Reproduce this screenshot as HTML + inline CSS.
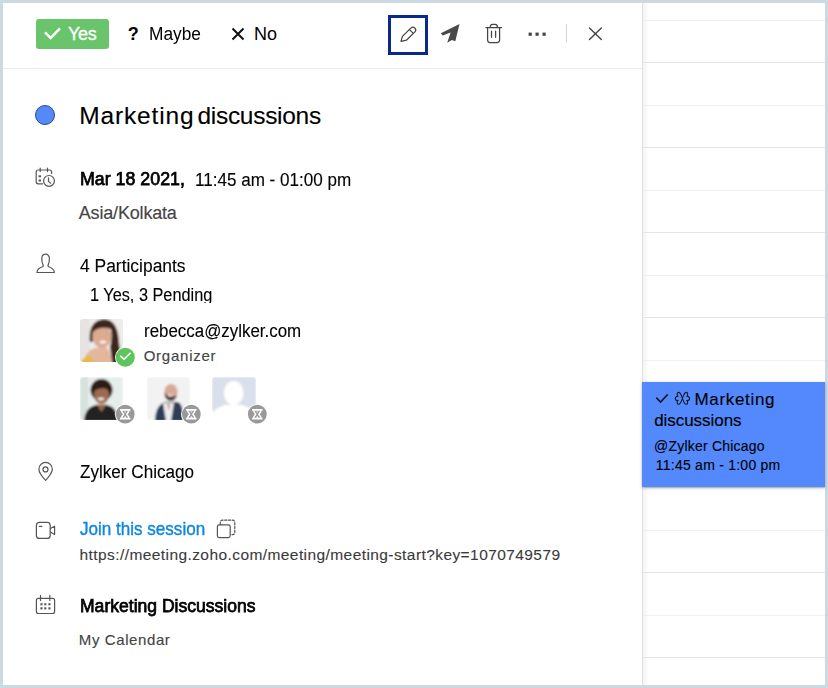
<!DOCTYPE html>
<html><head><meta charset="utf-8">
<style>
html,body{margin:0;padding:0;}
body{width:828px;height:688px;position:relative;overflow:hidden;background:#cbd9e0;font-family:"Liberation Sans",sans-serif;}
.a{position:absolute;}
.t{position:absolute;white-space:nowrap;line-height:1;}
#white{left:3px;top:3px;width:822px;height:682px;background:#fff;}
.hl{position:absolute;left:643px;width:182px;height:1px;background:#efefef;}
.hd{background:#e4e4e4;}
#vline{left:642px;top:3px;width:1px;height:682px;background:#e2e2e2;}
#vshade{left:643px;top:3px;width:6px;height:682px;background:linear-gradient(to right,#f3f3f3,#fff);}
#hdrline{left:3px;top:68px;width:639px;height:1px;background:#ececec;}
</style></head>
<body>
<div id="white" class="a"></div>
<div id="vshade" class="a"></div>
<div class="hl" style="top:20px"></div>
<div class="hl hd" style="top:62px"></div>
<div class="hl" style="top:105px"></div>
<div class="hl hd" style="top:147px"></div>
<div class="hl" style="top:190px"></div>
<div class="hl hd" style="top:232px"></div>
<div class="hl" style="top:275px"></div>
<div class="hl hd" style="top:317px"></div>
<div class="hl" style="top:360px"></div>
<div class="hl hd" style="top:402px"></div>
<div class="hl" style="top:445px"></div>
<div class="hl hd" style="top:487px"></div>
<div class="hl" style="top:530px"></div>
<div class="hl hd" style="top:572px"></div>
<div class="hl" style="top:615px"></div>
<div class="hl hd" style="top:657px"></div>
<div id="vline" class="a"></div>
<div id="hdrline" class="a"></div>

<!-- header -->
<div class="a" style="left:36px;top:19px;width:73px;height:30px;background:#69c46b;border-radius:3px;"></div>
<svg class="a" style="left:44px;top:27px" width="18" height="13" viewBox="0 0 18 13"><path d="M1 5.4 L6.7 10.9 L16 1.3" fill="none" stroke="#fff" stroke-width="2.5"/></svg>
<div id="tyes" class="t" style="left:67.9px;top:25.0px;font-size:18px;color:#fff;-webkit-text-stroke:0.3px #fff;letter-spacing:-0.25px;">Yes</div>
<div id="tq" class="t" style="left:127.8px;top:24.6px;font-size:18px;color:#000;font-weight:bold;">?</div>
<div id="tmaybe" class="t" style="left:149.2px;top:24.6px;font-size:18px;color:#000;transform:scaleX(0.962);transform-origin:0 0;">Maybe</div>
<svg class="a" style="left:231px;top:27px" width="14" height="14" viewBox="0 0 14 14"><path d="M1.5 1.5 L12.5 12.5 M12.5 1.5 L1.5 12.5" fill="none" stroke="#111" stroke-width="2"/></svg>
<div id="tno" class="t" style="left:254.0px;top:24.6px;font-size:18px;color:#000;">No</div>

<div class="a" style="left:388px;top:15px;width:34px;height:34px;border:3px solid #072a8c;"></div>
<svg class="a" style="left:0;top:0" width="828" height="688" viewBox="0 0 828 688">
 <g fill="none" stroke="#444" stroke-width="1.25" stroke-linecap="round" stroke-linejoin="round">
  <!-- pencil -->
  <path d="M401,41.4 L402.4,36.4 L410.8,28.1 A2.7,2.7 0 0 1 414.9,31.9 L406.4,40.2 Z M409.4,29.6 L412.6,32.6"/>
  <!-- trash -->
  <path d="M486,27.5 H501.5 M490.3,27.5 V26.5 A2.2,2.2 0 0 1 492.5,24.3 H495.1 A2.2,2.2 0 0 1 497.3,26.5 V27.5 M487.6,27.5 V40 A2.5,2.5 0 0 0 490.1,42.5 H497.1 A2.5,2.5 0 0 0 499.6,40 V27.5 M491.5,31.2 V37.3 M495.6,31.2 V37.3"/>
  <!-- close X -->
  <path d="M589.5,28 L601.3,39.6 M601.3,28 L589.5,39.6" stroke-width="1.4"/>
 </g>
 <!-- paper plane -->
 <path d="M459.5,24 L440.8,33.2 L442.8,35.6 L450.6,32.4 L447.2,42.8 L451.8,39.9 L455.3,41.2 Z" fill="#4a4a4a"/>
 <!-- dots -->
 <rect x="528.6" y="32.6" width="3.2" height="3.2" fill="#444"/>
 <rect x="535.5" y="32.6" width="3.2" height="3.2" fill="#444"/>
 <rect x="542.5" y="32.6" width="3.2" height="3.2" fill="#444"/>
 <rect x="566" y="24" width="1" height="18.5" fill="#d4d4d4"/>

 <g fill="none" stroke="#555" stroke-width="1.2" stroke-linecap="round" stroke-linejoin="round">
  <!-- calendar clock -->
  <path d="M42.5,183.8 H38.2 A2,2 0 0 1 36.2,181.8 V172 A2,2 0 0 1 38.2,170 H49.6 A2,2 0 0 1 51.6,172 V173.6"/>
  <path d="M40.2,168.2 V171.6 M47.5,168.2 V171.6"/>
  <circle cx="49" cy="180.9" r="5.4"/>
  <path d="M48.5,177.9 V181.4 L50.6,183.2"/>
  <!-- person -->
  <path d="M37,272.5 H54.3 C54.3,269.3 51.3,267.6 48.7,266.7 C48,266.3 47.9,265.3 48.4,264.3 C49.2,262.8 49.4,260.6 49.4,258.5 C49.4,255.9 47.7,254.2 45.6,254.2 C43.5,254.2 41.8,255.9 41.8,258.5 C41.8,260.6 42,262.8 42.8,264.3 C43.3,265.3 43.2,266.3 42.5,266.7 C39.9,267.6 37,269.3 37,272.5 Z"/>
  <!-- pin -->
  <path d="M45.6,480.4 C42.2,476.8 38.9,473.2 38.9,469.3 A6.7,6.9 0 0 1 52.3,469.3 C52.3,473.2 49,476.8 45.6,480.4 Z"/>
  <circle cx="45.5" cy="469.4" r="2.5"/>
  <!-- video -->
  <rect x="36.4" y="522.4" width="13.8" height="16" rx="3"/>
  <path d="M39.3,526.3 H41.8"/>
  <path d="M50.4,528.6 L54.6,526.2 V534.6 L50.4,532"/>
  <!-- calendar -->
  <path d="M40.5,598.4 H38.4 A2,2 0 0 0 36.4,600.4 V611.5 A2,2 0 0 0 38.4,613.5 H52.6 A2,2 0 0 0 54.6,611.5 V600.4 A2,2 0 0 0 52.6,598.4 H49.8 M40.5,598.4 H49.8"/>
  <path d="M40.5,595.4 V600.4 M49.8,595.4 V600.4"/>
  <!-- copy -->
  <rect x="217.4" y="524.8" width="12.8" height="12.8" rx="1.8"/>
  <path d="M220.3,524.6 V522.2 A2,2 0 0 1 222.3,520.2 H232.8 A2,2 0 0 1 234.8,522.2 V532.6 A2,2 0 0 1 232.8,534.6 H230.4" stroke-dasharray="2.2 1.6"/>
 </g>
 <defs>
  <filter id="bl" x="-5%" y="-5%" width="110%" height="110%"><feGaussianBlur stdDeviation="0.8"/></filter>
  <clipPath id="c1"><rect x="80" y="319" width="43" height="43" rx="3"/></clipPath>
  <clipPath id="c2"><rect x="80" y="377" width="43" height="43" rx="3"/></clipPath>
  <clipPath id="c3"><rect x="147" y="377" width="43" height="43" rx="3"/></clipPath>
  <clipPath id="c4"><rect x="212" y="377" width="44" height="43" rx="3"/></clipPath>
 </defs>
 <!-- organizer photo -->
 <g clip-path="url(#c1)"><g filter="url(#bl)">
  <rect x="78" y="317" width="47" height="47" fill="#efebe8"/>
  <rect x="78" y="317" width="12" height="47" fill="#e5e4e2"/>
  <path d="M90,342 C89,331 91,321 103,319.3 C112,319 117,325 118.5,337 C119.5,347 120.5,355 122,364 L112,364 C111.5,356 110.5,350 110,347 C112,340 112,330 110,327 C105,324 97,325 93,331 C92.5,335 92.5,339 93,342 Z" fill="#3e271e"/>
  <ellipse cx="102" cy="336.5" rx="9.3" ry="11.5" fill="#dcaa8f"/>
  <path d="M92.8,333 C93,326 97,323 102,323 C107,323 110.5,325.5 111.5,330 C108,327 100,326.5 94,331 Z" fill="#3e271e"/>
  <ellipse cx="103" cy="342" rx="3.3" ry="1.6" fill="#f8f2ee"/>
  <path d="M83,364 C84,355 89,350 95,348 L106,347.5 C110,350 111.5,356 112,364 Z" fill="#e3b79b"/>
  <path d="M80,364 C81,359.5 85,357 90,356 L95,364 Z" fill="#e5bb40"/>
 </g></g>
 <circle cx="125.3" cy="357.3" r="10.3" fill="#fff"/>
 <circle cx="125.3" cy="357.3" r="9.5" fill="#5ec45e"/>
 <path d="M120.3,355.8 L124.1,359.2 L130.6,352.8" fill="none" stroke="#fff" stroke-width="1.6"/>
 <!-- woman 2 -->
 <g clip-path="url(#c2)"><g filter="url(#bl)">
  <rect x="80" y="377" width="43" height="43" fill="#e6eeeb"/>
  <rect x="80" y="377" width="8" height="43" fill="#d6e2de"/>
  <ellipse cx="101.5" cy="390" rx="11" ry="11" fill="#2b1b15"/>
  <ellipse cx="101.5" cy="395" rx="7.6" ry="8.8" fill="#9c6a50"/>
  <path d="M94.5,391 C95.5,385.5 98.5,383.5 101.5,383.5 C105.5,383.5 108,386 108.5,390 C105,387.5 98.5,387.5 94.5,391 Z" fill="#2b1b15"/>
  <path d="M84,421 C85,410 90,406.5 96,405 L107,405 C113,406.5 117,410 118,421 Z" fill="#222023"/>
  <path d="M96.5,404.5 L101.5,412 L106.5,404.5 Z" fill="#98654b"/>
  <ellipse cx="101" cy="399" rx="3.2" ry="1.4" fill="#f2e6e0"/>
 </g></g>
 <!-- man -->
 <g clip-path="url(#c3)"><g filter="url(#bl)">
  <rect x="147" y="377" width="43" height="43" fill="#f2f2f2"/>
  <ellipse cx="171" cy="392" rx="6.6" ry="8" fill="#d9a898"/>
  <path d="M164.5,393 C164.5,399 168,401 171,401 C174,401 176.5,398 177,395 C174,397.5 168,397 164.5,393 Z" fill="#4f3b34"/>
  <ellipse cx="170" cy="395.5" rx="2.4" ry="1.1" fill="#f4ece8"/>
  <path d="M155,421 C155.5,409 159,404.5 165,402 L178,402 C182,404 183,409 183.5,421 Z" fill="#2f3c54"/>
  <path d="M163,403 L166,421 L171,421 L174,403 Z" fill="#ededed"/>
  <path d="M167,404 L169,411 L170,404 Z" fill="#c98b86"/>
 </g></g>
 <!-- placeholder -->
 <g clip-path="url(#c4)"><g filter="url(#bl)">
  <rect x="212" y="377" width="44" height="43" fill="#d9dfeb"/>
  <ellipse cx="233.7" cy="393" rx="9.8" ry="12" fill="#fff"/>
  <path d="M210,421 V416 C213,410 219,407 225,405 L242,405 C248,407 254,410 258,416 V421 Z" fill="#fff"/>
 </g></g>
 <g>
  <circle cx="125.2" cy="414.2" r="10.3" fill="#fff"/><circle cx="125.2" cy="414.2" r="9.4" fill="#999"/>
  <circle cx="191.3" cy="414.2" r="10.3" fill="#fff"/><circle cx="191.3" cy="414.2" r="9.4" fill="#999"/>
  <circle cx="257.3" cy="414.2" r="10.3" fill="#fff"/><circle cx="257.3" cy="414.2" r="9.4" fill="#999"/>
 </g>
 <g id="hgall">
  <g id="hg">
   <rect x="120" y="409" width="10.4" height="1.8" fill="#fff"/>
   <rect x="120" y="417.7" width="10.4" height="1.8" fill="#fff"/>
   <path d="M121.6,410.6 C121.8,412.6 123.6,413.4 123.6,414.25 C123.6,415.1 121.8,415.9 121.6,417.9 M128.8,410.6 C128.6,412.6 126.8,413.4 126.8,414.25 C126.8,415.1 128.6,415.9 128.8,417.9" fill="none" stroke="#fff" stroke-width="1.5"/>
   <path d="M124,411.6 H126.4 L125.2,413 Z M123.6,417.7 L125.2,415.8 L126.8,417.7 Z" fill="#fff" opacity="0.85"/>
  </g>
  <use href="#hg" x="66.1"/>
  <use href="#hg" x="132.1"/>
 </g>
 <g fill="#555">
  <rect x="38.6" y="175.3" width="2.4" height="2" />
  <rect x="38.6" y="179.5" width="2.4" height="2" />
  <rect x="40.4" y="603.2" width="2.1" height="2.1"/><rect x="44.2" y="603.2" width="2.1" height="2.1"/><rect x="48.4" y="603.2" width="2.1" height="2.1"/>
  <rect x="40.4" y="607.3" width="2.1" height="2.1"/><rect x="44.2" y="607.3" width="2.1" height="2.1"/><rect x="48.4" y="607.3" width="2.1" height="2.1"/>
 </g>
</svg>

<!-- body -->
<div class="a" style="left:35px;top:105px;width:18px;height:18px;border-radius:50%;background:#5489f7;border:1px solid #27479a;"></div>
<div id="ttitle" class="t" style="left:79.2px;top:104.0px;font-size:24.5px;color:#000;-webkit-text-stroke:0.12px #000;letter-spacing:0.86px;">Marketing</div>
<div id="ttitle2" class="t" style="left:197.5px;top:104.0px;font-size:24.5px;color:#000;-webkit-text-stroke:0.12px #000;letter-spacing:-0.30px;">discussions</div>

<div id="tdate" class="t" style="left:80.0px;top:170.2px;font-size:18.5px;color:#000;-webkit-text-stroke:0.75px #000;transform:scaleX(0.962);transform-origin:0 0;">Mar 18 2021,</div>
<div id="ttime" class="t" style="left:194.7px;top:171.4px;font-size:18px;color:#000;-webkit-text-stroke:0.12px #000;transform:scaleX(0.948);transform-origin:0 0;">11:45 am - 01:00 pm</div>
<div id="ttz" class="t" style="left:78.8px;top:204.2px;font-size:18px;color:#454545;-webkit-text-stroke:0.15px #454545;letter-spacing:-0.18px;">Asia/Kolkata</div>

<div id="tpart" class="t" style="left:80.0px;top:257.3px;font-size:18px;color:#000;-webkit-text-stroke:0.12px #000;transform:scaleX(0.968);transform-origin:0 0;">4 Participants</div>
<div class="a" style="left:80px;top:284px;width:200px;height:19px;overflow:hidden;"><div id="tpend" class="t" style="left:10.2px;top:1.8px;font-size:18px;color:#000;-webkit-text-stroke:0.12px #000;transform:scaleX(0.905);transform-origin:0 0;">1 Yes, 3 Pending</div></div>

<div id="temail" class="t" style="left:144.2px;top:321.5px;font-size:18px;color:#000;-webkit-text-stroke:0.12px #000;transform:scaleX(0.939);transform-origin:0 0;">rebecca@zylker.com</div>
<div id="torg" class="t" style="left:143.7px;top:347.8px;font-size:15px;color:#454545;-webkit-text-stroke:0.15px #454545;letter-spacing:0.75px;">Organizer</div>

<div id="tloc" class="t" style="left:80.2px;top:462.5px;font-size:18px;color:#000;-webkit-text-stroke:0.12px #000;transform:scaleX(0.95);transform-origin:0 0;">Zylker Chicago</div>
<div id="tjoin" class="t" style="left:80.0px;top:520.1px;font-size:18.5px;color:#0c87e3;-webkit-text-stroke:0.4px #0c87e3;transform:scaleX(0.922);transform-origin:0 0;">Join this session</div>
<div id="turl" class="t" style="left:79.5px;top:547.1px;font-size:15.5px;color:#3a3a3a;-webkit-text-stroke:0.1px #3a3a3a;letter-spacing:0.42px;">https://meeting.zoho.com/meeting/meeting-start?key=1070749579</div>
<div id="tcal" class="t" style="left:79.8px;top:596.6px;font-size:18px;color:#000;-webkit-text-stroke:0.75px #000;transform:scaleX(0.975);transform-origin:0 0;">Marketing Discussions</div>
<div id="tmycal" class="t" style="left:78.8px;top:631.5px;font-size:15px;color:#454545;-webkit-text-stroke:0.15px #454545;letter-spacing:0.6px;">My Calendar</div>

<!-- event -->
<div class="a" style="left:642px;top:382px;width:183px;height:105px;background:#5389fd;box-shadow:0 1px 3px rgba(0,0,0,0.3);"></div>
<div id="tev1" class="t" style="left:694.4px;top:390.8px;font-size:17px;color:#000;-webkit-text-stroke:0.12px #000;letter-spacing:0.69px;">Marketing</div>
<div id="tev2" class="t" style="left:654.2px;top:411.5px;font-size:17px;color:#000;-webkit-text-stroke:0.12px #000;letter-spacing:-0.05px;">discussions</div>
<div id="tev3" class="t" style="left:654.0px;top:439.4px;font-size:14px;color:#000;-webkit-text-stroke:0.12px #000;letter-spacing:0.21px;">@Zylker Chicago</div>
<div id="tev4" class="t" style="left:655.8px;top:458.3px;font-size:14px;color:#000;-webkit-text-stroke:0.12px #000;letter-spacing:0.24px;">11:45 am - 1:00 pm</div>

<svg class="a" style="left:0;top:0" width="828" height="688" viewBox="0 0 828 688">
 <path d="M656.3,397.6 L660.6,402 L667.7,394.4" fill="none" stroke="#111827" stroke-width="1.6"/>
 <g fill="none" stroke="#111827" stroke-width="1.1">
  <path d="M682.4,398.4 C681.5,396 680.5,392.4 678.7,392.4 C676.8,392.4 676.8,395 677.8,396.3 C676,396.3 675.3,397.2 675.3,398.4 C675.3,399.6 676,400.5 677.8,400.5 C676.8,401.8 676.8,404.3 678.7,404.3 C680.5,404.3 681.5,400.8 682.4,398.4 Z M682.4,398.4 C683.3,396 684.3,392.4 686.1,392.4 C688,392.4 688,395 687,396.3 C688.8,396.3 689.5,397.2 689.5,398.4 C689.5,399.6 688.8,400.5 687,400.5 C688,401.8 688,404.3 686.1,404.3 C684.3,404.3 683.3,400.8 682.4,398.4 Z"/>
 </g>
</svg>
</body></html>
